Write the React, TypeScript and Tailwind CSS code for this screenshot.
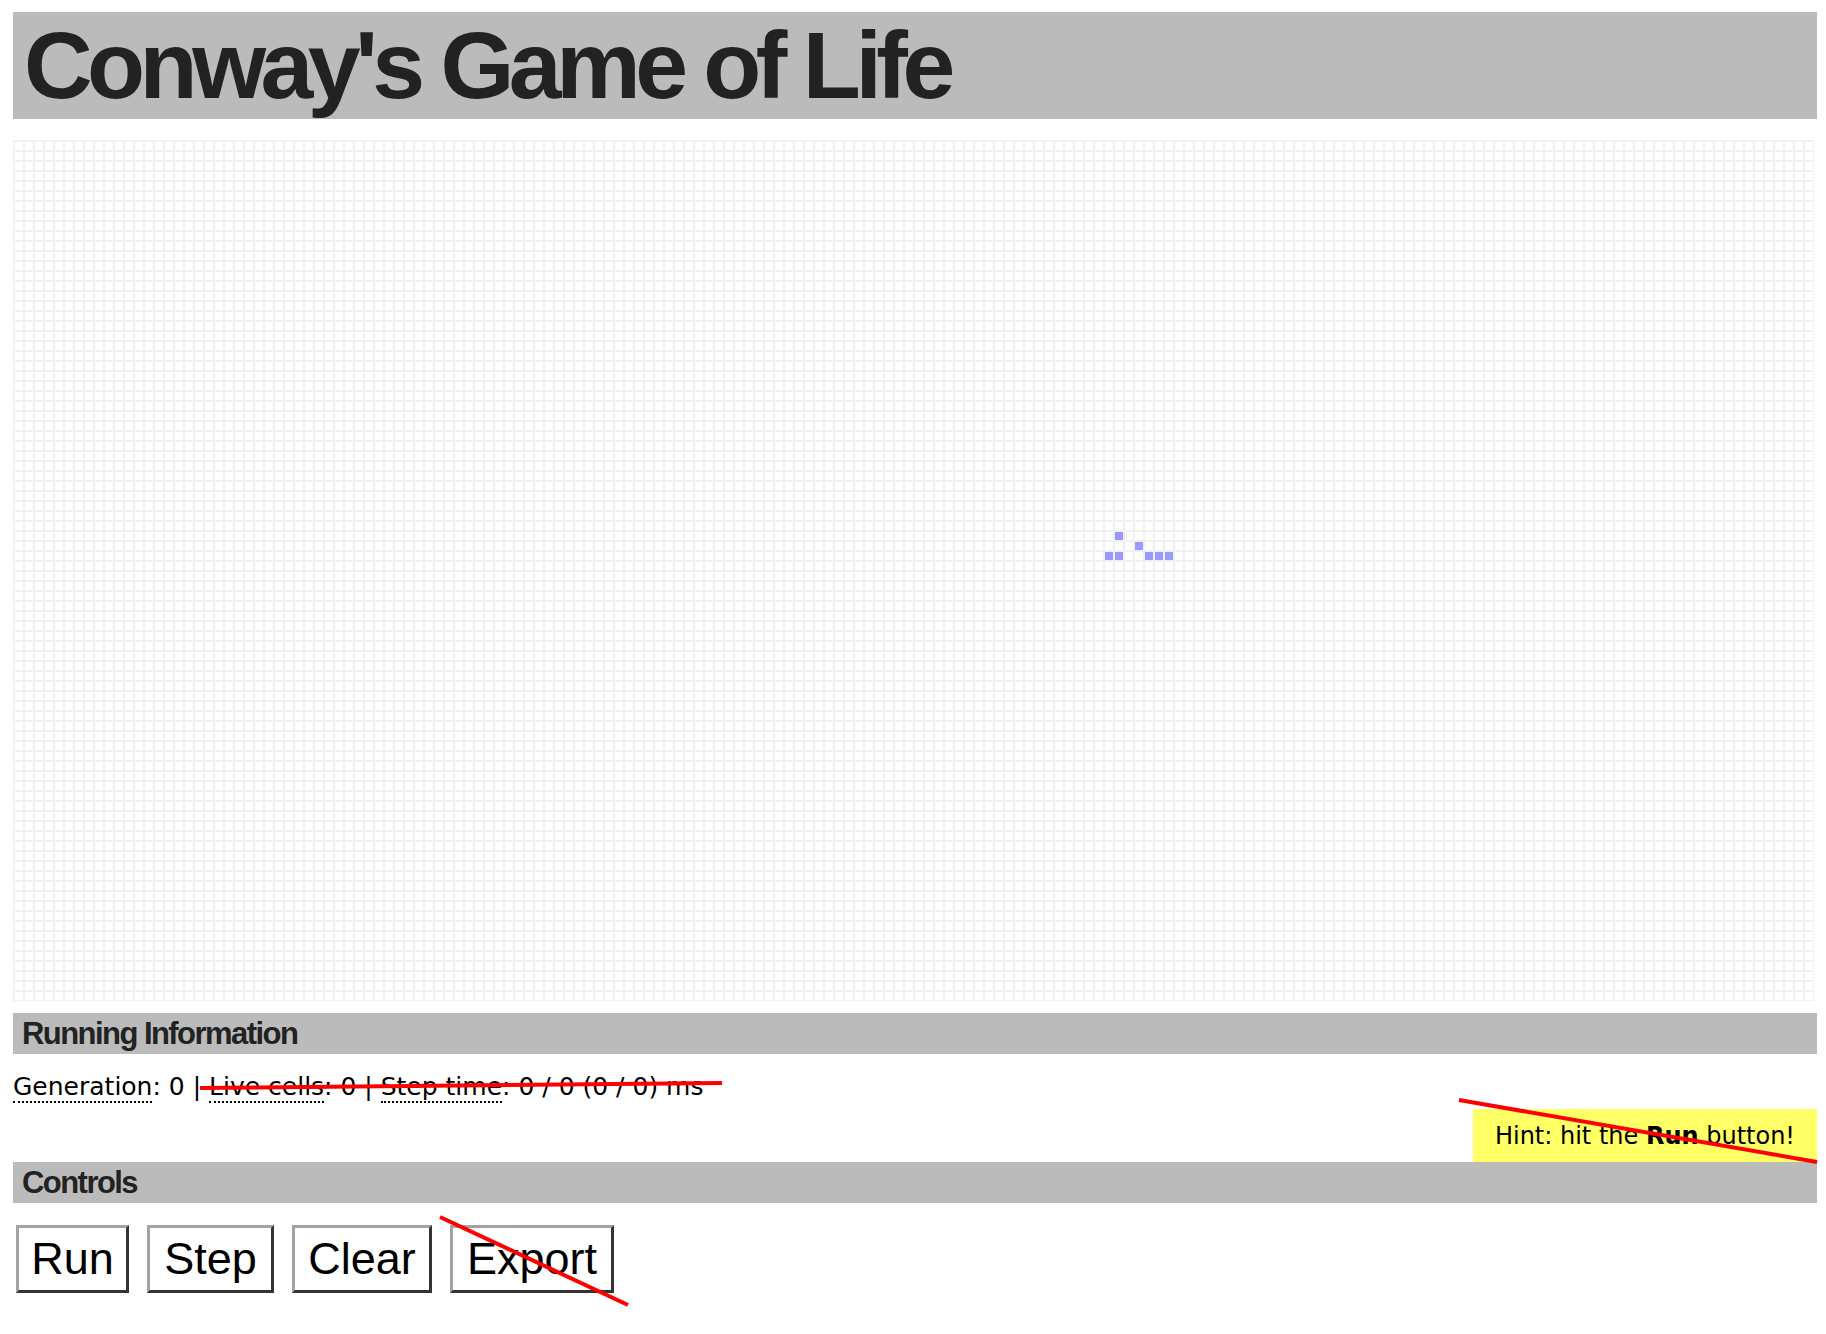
import React from "react";

// acorn pattern, [row, col] on the 10px board
const liveCells: [number, number][] = [
  [39, 110],
  [40, 112],
  [41, 109],
  [41, 110],
  [41, 113],
  [41, 114],
  [41, 115],
];

function Board() {
  return (
    <svg width={1801} height={861} className="block">
      <defs>
        <pattern id="cells" width="10" height="10" patternUnits="userSpaceOnUse">
          <rect width="10" height="10" fill="#f1f1f1" />
          <rect x="2" y="2" width="8" height="8" fill="#ffffff" />
        </pattern>
      </defs>
      <rect width="1801" height="861" fill="url(#cells)" />
      {liveCells.map(([r, c]) => (
        <rect key={`${r}-${c}`} x={c * 10 + 2} y={r * 10 + 2} width={8} height={8} fill="#9999ff" />
      ))}
    </svg>
  );
}

function SectionBar({ title }: { title: string }) {
  return (
    <h2 className="h-[41px] bg-[#bbbbbb] pl-[9px] text-[31px] leading-[41px] font-bold tracking-[-0.05em] text-[#222] font-['Liberation_Sans',Arial,sans-serif]">
      {title}
    </h2>
  );
}

function Abbr({ children }: { children: React.ReactNode }) {
  return <span className="border-b-2 border-dotted border-black">{children}</span>;
}

const buttons = [
  { label: "Run", w: "w-[113px]" },
  { label: "Step", w: "w-[127px]" },
  { label: "Clear", w: "w-[140px]" },
  { label: "Export", w: "w-[164px]" },
];

export default function App() {
  return (
    <div className="relative w-[1826px] h-[1334px] bg-white overflow-hidden">
      <div className="pt-[12px] pl-[13px] w-[1817px]">
        {/* Title */}
        <h1 className="h-[107px] bg-[#bbbbbb] pl-[11px] text-[95px] leading-[107px] font-bold tracking-[-0.058em] text-[#222] whitespace-nowrap font-['Liberation_Sans',Arial,sans-serif]">
          Conway's Game of Life
        </h1>

        {/* Board */}
        <div className="mt-[21px]">
          <Board />
        </div>

        {/* Running information */}
        <div className="mt-[12px]">
          <SectionBar title="Running Information" />
        </div>
        <div className="mt-[18px] text-[25px] leading-[29px] text-black whitespace-nowrap font-['DejaVu_Sans',Verdana,sans-serif]">
          <Abbr>Generation</Abbr>: 0 | <Abbr>Live cells</Abbr>: 0 | <Abbr>Step time</Abbr>: 0 / 0 (0 / 0) ms
        </div>

        <div className="mt-[8px] flex justify-end">
          <div className="h-[53px] flex items-center bg-[#ffff66] px-[22px] text-[24px] text-black whitespace-nowrap font-['DejaVu_Sans',Verdana,sans-serif]">
            <span>
              Hint: hit the <b>Run</b> button!
            </span>
          </div>
        </div>

        {/* Controls */}
        <SectionBar title="Controls" />
        <div className="mt-[22px] pl-[3px] flex gap-[18px]">
          {buttons.map((b) => (
            <button
              key={b.label}
              className={`${b.w} h-[68px] bg-white border-[3px] border-t-[#a3a3a3] border-l-[#a3a3a3] border-b-[#333333] border-r-[#333333] text-[45px] leading-[50px] text-black text-center font-['Liberation_Sans',Arial,sans-serif]`}
            >
              {b.label}
            </button>
          ))}
        </div>
      </div>

      {/* red annotation strokes over the page */}
      <svg width={1826} height={1334} className="absolute inset-0 pointer-events-none">
        <line x1={200} y1={1088} x2={722} y2={1083} stroke="#ff0000" strokeWidth={4} />
        <line x1={1459} y1={1100} x2={1817} y2={1162} stroke="#ff0000" strokeWidth={4} />
        <line x1={440} y1={1217} x2={628} y2={1305} stroke="#ff0000" strokeWidth={4} />
      </svg>
    </div>
  );
}
